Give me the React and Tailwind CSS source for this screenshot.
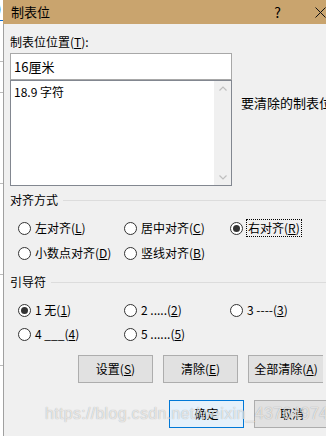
import React from "react";

const font = { fontFamily: '"Microsoft YaHei", "Noto Sans CJK SC", "Noto Sans", sans-serif' };

// radio with optional checked dot
const Radio = ({ checked }) => (
  <span className="w-[13px] h-[13px] rounded-full border border-[#333] bg-white flex items-center justify-center shrink-0">
    {checked && <span className="w-[7px] h-[7px] rounded-full bg-[#333]" />}
  </span>
);

const Option = ({ checked, text, keyChar, focus }) => (
  <div className="flex items-center gap-[4px] w-[106px]">
    <Radio checked={checked} />
    <span
      className={`whitespace-nowrap leading-[16px] ${
        focus ? "outline outline-1 outline-dotted outline-black px-[1px]" : ""
      }`}
    >
      {text}(<span className="underline">{keyChar}</span>)
    </span>
  </div>
);

const GroupLabel = ({ children }) => (
  <div className="flex items-center gap-[5px] h-[16px]">
    <span className="leading-[16px] whitespace-nowrap">{children}</span>
    <span className="flex-1 h-px bg-[#dcdcdc]" />
  </div>
);

const Button = ({ text, keyChar, primary, cut }) => (
  <div
    className={`h-[28px] w-[75px] shrink-0 flex items-center justify-center border ${
      primary ? "bg-[#e5f1fb] border-[#0078d7]" : "bg-[#e1e1e1] border-[#adadad]"
    } ${cut ? "border-r-0" : ""}`}
  >
    <span className="leading-[16px] whitespace-nowrap">
      {text}
      {keyChar && (
        <>
          (<span className="underline">{keyChar}</span>)
        </>
      )}
    </span>
  </div>
);

export default function App() {
  return (
    <div
      className="relative w-[326px] h-[436px] overflow-hidden flex bg-[#f0f0f0] text-[12px] text-black"
      style={font}
    >
      {/* document behind the dialog */}
      <div className="w-[3px] shrink-0 bg-white flex flex-col">
        <div className="h-[20px] text-[13px] leading-[18px] -ml-[3px]">)</div>
        <div className="h-px bg-[#0b6bd0]" />
        <div className="h-[40px]" />
        <div className="h-px bg-[#bbb]" />
        <div className="h-[30px]" />
        <div className="h-px bg-[#bbb]" />
        <div className="h-[90px]" />
        <div className="h-px bg-[#bbb]" />
        <div className="h-[90px]" />
        <div className="h-px bg-[#bbb]" />
        <div className="h-[90px]" />
        <div className="h-px bg-[#bbb]" />
      </div>

      <div className="flex-1 flex flex-col border-l border-[#a0a0a0]">
        {/* Title bar */}
        <div className="h-[24px] bg-[#c9a46e] flex items-center pl-[8px] -ml-px">
          <span className="text-[13px] leading-[16px]">制表位</span>
          <span className="ml-auto text-[14px] leading-[16px] mr-[34px]">?</span>
          <svg width="11" height="11" viewBox="0 0 11 11" className="mr-[10px]">
            <path d="M0.5 0.5L10.5 10.5M10.5 0.5L0.5 10.5" stroke="#111" strokeWidth="1" />
          </svg>
        </div>

        <div className="pl-[6px] flex flex-col">
          <div className="mt-[10px] leading-[16px]">
            制表位位置(<span className="underline">T</span>):
          </div>

          <div className="flex mt-[3px]">
            <div className="w-[222px] shrink-0 flex flex-col">
              <div className="h-[27px] bg-white border border-[#a8a8a8] flex items-center pl-[3px] text-[13px]">
                16厘米
              </div>
              <div className="h-[106px] bg-white border border-[#828790] flex">
                <div className="flex-1 pl-[3px] pt-[3px] text-[12px] leading-[16px]">18.9 字符</div>
                <div className="w-[17px] bg-[#f0f0f0] flex flex-col items-center justify-between py-[5px]">
                  <svg width="8" height="5" viewBox="0 0 8 5">
                    <path d="M0.5 4.5L4 1L7.5 4.5" stroke="#bfbfbf" fill="none" strokeWidth="1.2" />
                  </svg>
                  <svg width="8" height="5" viewBox="0 0 8 5">
                    <path d="M0.5 0.5L4 4L7.5 0.5" stroke="#bfbfbf" fill="none" strokeWidth="1.2" />
                  </svg>
                </div>
              </div>
            </div>
            <div className="ml-[9px] mt-[42px] leading-[16px] whitespace-nowrap text-[13px]">
              要清除的制表位
            </div>
          </div>

          <div className="mt-[6px]">
            <GroupLabel>对齐方式</GroupLabel>
          </div>
          <div className="pl-[8px] flex flex-col gap-[9px] mt-[12px]">
            <div className="flex">
              <Option text="左对齐" keyChar="L" />
              <Option text="居中对齐" keyChar="C" />
              <Option text="右对齐" keyChar="R" checked focus />
            </div>
            <div className="flex">
              <Option text="小数点对齐" keyChar="D" />
              <Option text="竖线对齐" keyChar="B" />
            </div>
          </div>

          <div className="mt-[13px]">
            <GroupLabel>引导符</GroupLabel>
          </div>
          <div className="pl-[8px] flex flex-col gap-[8px] mt-[12px]">
            <div className="flex">
              <Option text="1 无" keyChar="1" checked />
              <Option text="2 ....." keyChar="2" />
              <Option text="3 ----" keyChar="3" />
            </div>
            <div className="flex">
              <Option text="4 ___" keyChar="4" />
              <Option text="5 ......" keyChar="5" />
            </div>
          </div>

          <div className="flex gap-[10px] pl-[68px] mt-[13px]">
            <Button text="设置" keyChar="S" />
            <Button text="清除" keyChar="E" />
            <Button text="全部清除" keyChar="A" cut />
          </div>

          <div className="flex gap-[10px] pl-[159px] mt-[17px]">
            <Button text="确定" primary />
            <Button text="取消" cut />
          </div>
        </div>
      </div>

      {/* watermark */}
      <div
        className="absolute left-[45px] top-[403px] text-[16px] leading-[22px] text-white/70 whitespace-nowrap tracking-[0.3px]"
        style={{ fontFamily: '"Liberation Sans", Arial, sans-serif', textShadow: "0 0 1px rgba(0,0,0,0.35)" }}
      >
        https://blog.csdn.net/weixin_43764974
      </div>
    </div>
  );
}
